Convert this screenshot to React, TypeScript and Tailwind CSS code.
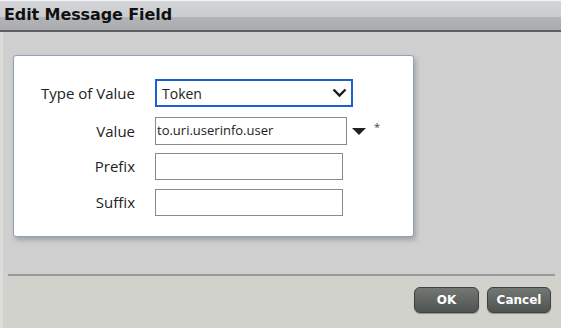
import React from "react";

export default function App() {
  return (
    <div className="w-[561px] h-[328px] overflow-hidden flex flex-col bg-[#d2d2ce]" style={{ fontFamily: '"Open Sans", "Noto Sans", sans-serif' }}>
      {/* Title bar */}
      <div className="h-[32px] flex flex-col shrink-0">
        <div className="h-[1px] bg-[#f4f4f4]" />
        <div className="h-[16px] bg-gradient-to-b from-[#d4d5d9] to-[#cbccd0]" />
        <div className="h-[13px] bg-gradient-to-b from-[#b3b4b8] to-[#aaacb0]" />
        <div className="h-[2px] bg-[#5e5f60]" />
      </div>
      <div className="absolute left-[4px] top-[5px] text-[16px] font-bold text-[#111] leading-[20px] tracking-[-0.1px]" style={{ fontFamily: '"DejaVu Sans", Verdana, sans-serif' }}>
        Edit Message Field
      </div>

      <div className="flex-1 flex flex-col border-l-[3px] border-[#dcdcd8]">
        <div className="h-[242px] flex flex-col bg-[#cfcfcf] pl-[10px] pt-[23px]">
          <div className="w-[401px] h-[182px] bg-white border border-[#8ea3b6] rounded-[3px] shadow-[2px_3px_5px_rgba(0,0,0,0.22)] pt-[23px] text-[13px] text-[#222]">
            <div className="flex items-center h-[28px]">
              <div className="w-[121px] text-right text-[15px]">Type of Value</div>
              <div className="ml-[20px] w-[198px] h-[28px] border-2 border-[#1c5fd3] flex items-center justify-between pl-[5px] pr-[4px]">
                <span className="text-[14px]">Token</span>
                <svg width="15" height="10" viewBox="0 0 15 10">
                  <path d="M1.5 1.5 L7.5 7.5 L13.5 1.5" stroke="#1a1a1a" strokeWidth="2.4" fill="none" />
                </svg>
              </div>
            </div>
            <div className="flex items-center h-[28px] mt-[10px]">
              <div className="w-[121px] text-right text-[15px]">Value</div>
              <div className="ml-[20px] w-[192px] h-[28px] border border-[#8a8a8a] flex items-center pl-[1px]">
                <span>to.uri.userinfo.user</span>
              </div>
              <svg className="ml-[5px]" width="14" height="7" viewBox="0 0 14 7">
                <path d="M0 0 L14 0 L7 7 Z" fill="#222" />
              </svg>
              <span className="ml-[8px] text-[11px] -mt-[8px] text-[#444]">*</span>
            </div>
            <div className="flex items-center h-[27px] mt-[8px]">
              <div className="w-[121px] text-right text-[15px]">Prefix</div>
              <div className="ml-[20px] w-[188px] h-[27px] border border-[#8a8a8a]" />
            </div>
            <div className="flex items-center h-[27px] mt-[9px]">
              <div className="w-[121px] text-right text-[15px]">Suffix</div>
              <div className="ml-[20px] w-[188px] h-[27px] border border-[#8a8a8a]" />
            </div>
          </div>
        </div>
        <div className="h-[2px] bg-[#9a9a9a] ml-[5px] mr-[6px]" />
        <div className="flex-1 flex justify-end items-start pt-[11px] pr-[10px] gap-[8px] bg-[#d1d2cc]">
          <button className="w-[65px] h-[26px] rounded-[6px] border border-[#3e413f] bg-gradient-to-b from-[#737774] to-[#505451] text-white font-bold text-[12px] shadow-[0_1px_1px_rgba(0,0,0,0.3)]" style={{ fontFamily: '"DejaVu Sans", Verdana, sans-serif' }}>
            OK
          </button>
          <button className="w-[64px] h-[26px] rounded-[6px] border border-[#3e413f] bg-gradient-to-b from-[#737774] to-[#505451] text-white font-bold text-[12px] shadow-[0_1px_1px_rgba(0,0,0,0.3)]" style={{ fontFamily: '"DejaVu Sans", Verdana, sans-serif' }}>
            Cancel
          </button>
        </div>
      </div>
    </div>
  );
}
